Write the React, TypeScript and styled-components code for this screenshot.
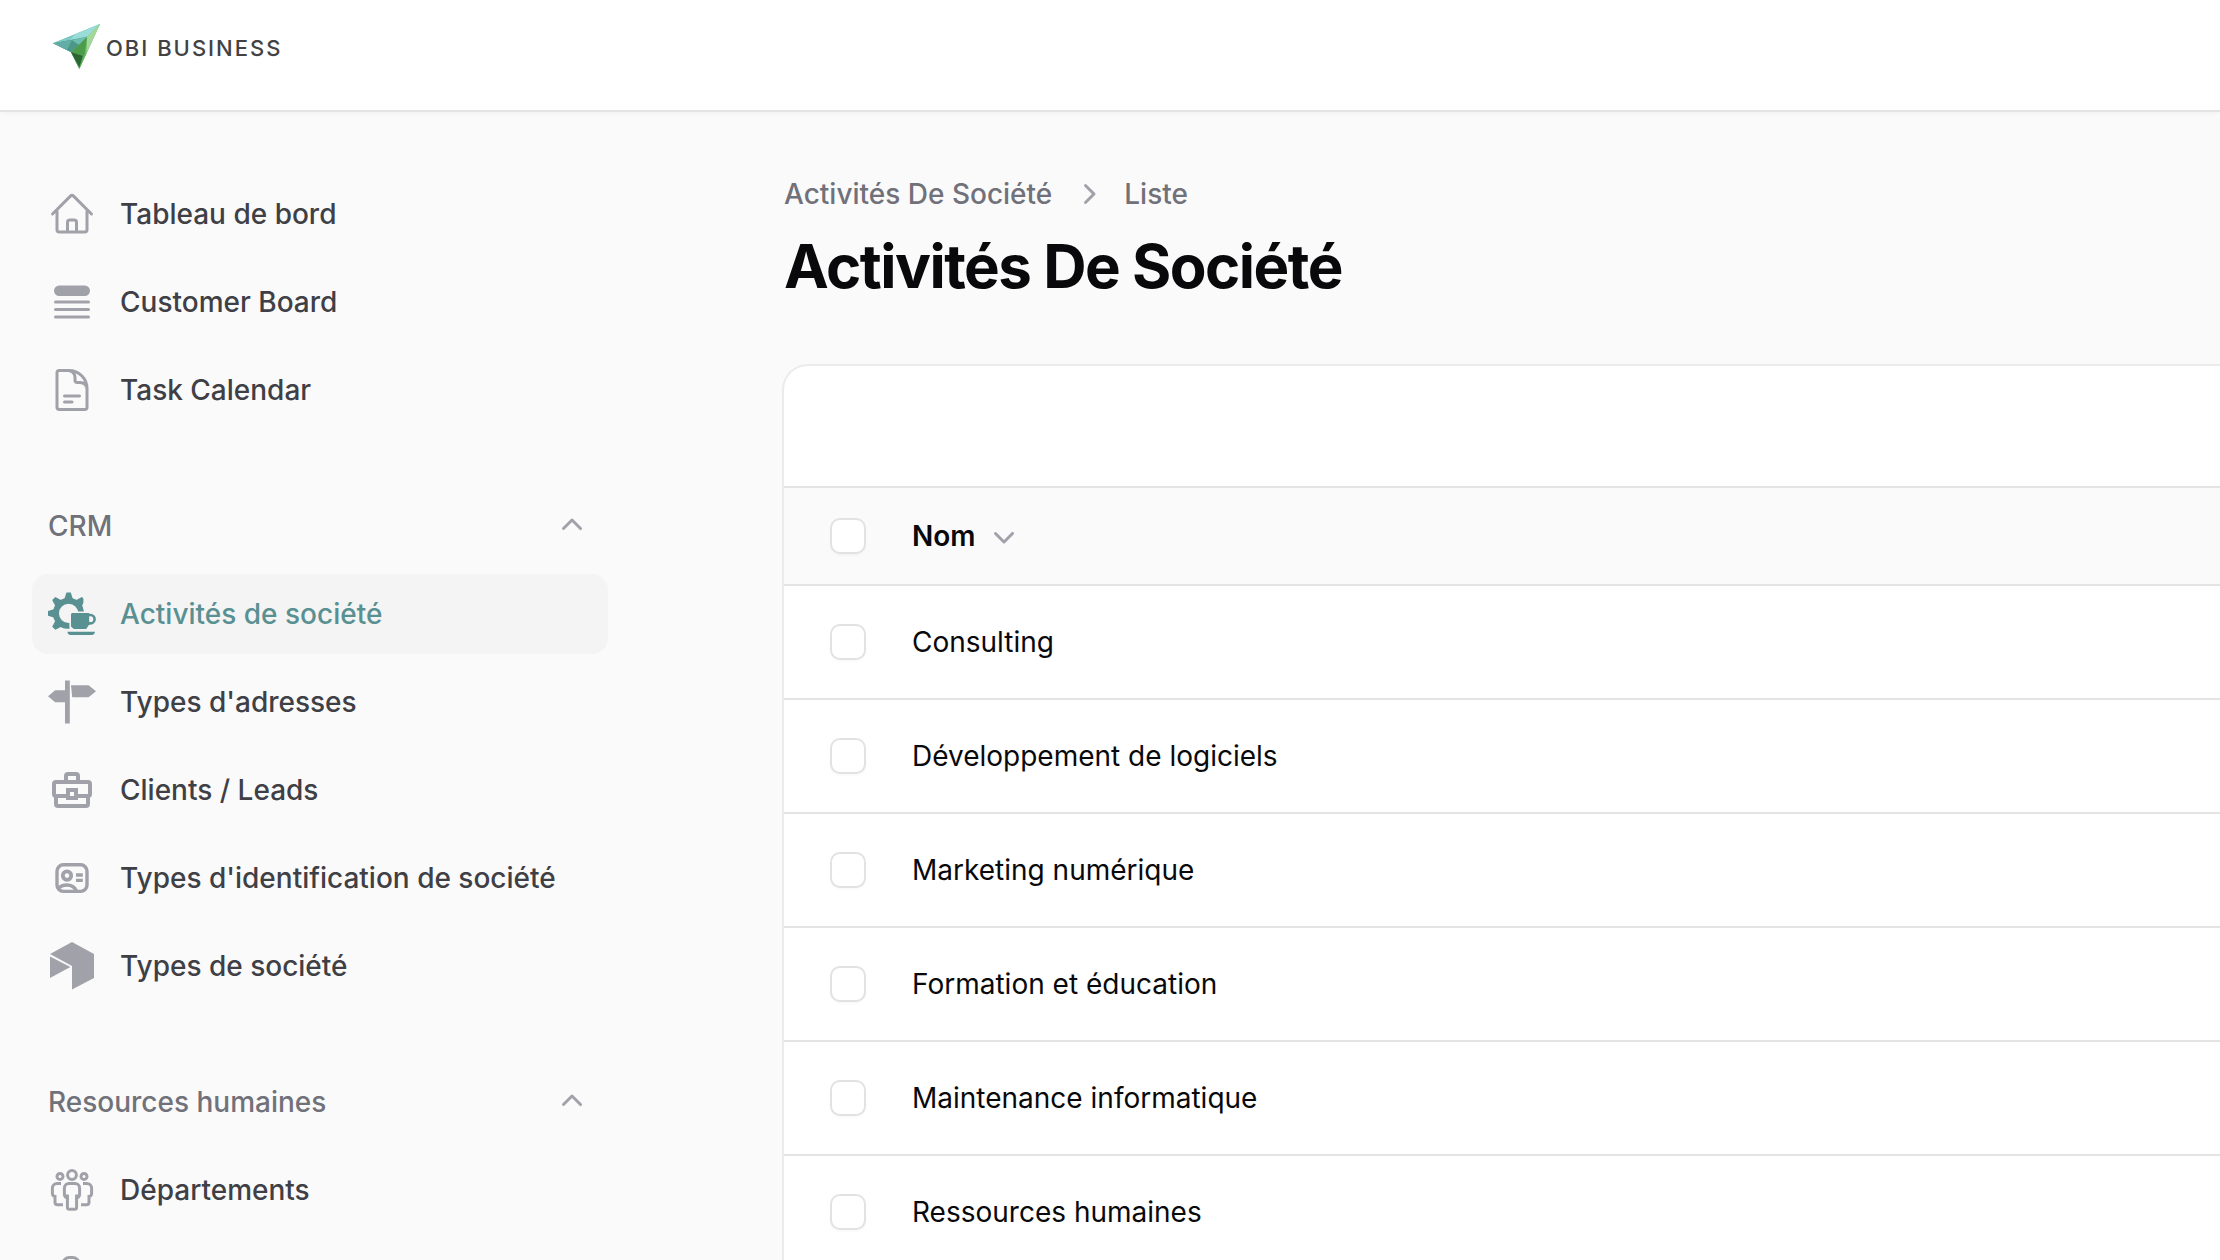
import React from "react";
import styled, { createGlobalStyle } from "styled-components";
import {
  HiOutlineHome,
  HiQueueList,
  HiOutlineDocumentText,
  HiMiniChevronUp,
  HiMiniChevronDown,
  HiMiniChevronRight,
} from "react-icons/hi2";

const color = {
  page: "#fafafa",
  line: "#e4e4e5",
  icon: "#a1a1aa",
  muted: "#71717a",
  label: "#3f3f46",
  ink: "#09090b",
  accent: "#599092",
  active: "#f4f4f4",
};

const GlobalStyle = createGlobalStyle`
  *, *::before, *::after { box-sizing: border-box; }
  body {
    margin: 0;
    background: ${color.page};
    color: ${color.ink};
    font-family: Inter, "Liberation Sans", sans-serif;
    font-size: 28px;
    line-height: 40px;
  }
`;

const Shell = styled.div`
  display: flex;
  flex-direction: column;
  height: 100vh;
  overflow: hidden;
`;

const Topbar = styled.header`
  display: flex;
  flex: none;
  padding: 20px 48px 34px;
  background: #fff;
  border-bottom: 2px solid ${color.line};
  box-shadow: 0 2px 4px rgba(0, 0, 0, 0.03);
`;

const Brand = styled.a`
  display: flex;
  align-items: center;
  gap: 4px;
  height: 56px;
  color: #424244;
  font-size: 22px;
  font-weight: 500;
  letter-spacing: 2px;
  text-decoration: none;
`;

const Body = styled.div`
  display: flex;
  flex: 1;
  min-height: 0;
`;

const Sidebar = styled.nav`
  display: flex;
  flex: none;
  flex-direction: column;
  gap: 56px;
  width: 640px;
  padding: 62px 32px 0;
`;

const Group = styled.section`
  display: flex;
  flex-direction: column;
  gap: 8px;
`;

const GroupToggle = styled.button`
  display: flex;
  align-items: center;
  justify-content: space-between;
  height: 80px;
  padding: 0 16px;
  border: 0;
  background: none;
  color: ${color.muted};
  font: inherit;
  font-weight: 500;
  text-align: left;
  cursor: pointer;

  svg {
    width: 40px;
    height: 40px;
    color: ${color.icon};
  }
`;

const ItemList = styled.ul`
  display: flex;
  flex-direction: column;
  gap: 8px;
  margin: 0;
  padding: 0;
  list-style: none;
`;

const ItemLink = styled.a<{ $active?: boolean }>`
  display: flex;
  align-items: center;
  gap: 24px;
  height: 80px;
  padding: 0 16px;
  border-radius: 16px;
  background: ${(p) => (p.$active ? color.active : "transparent")};
  color: ${(p) => (p.$active ? color.accent : color.label)};
  font-weight: 500;
  text-decoration: none;
  white-space: nowrap;

  svg {
    flex: none;
    width: 48px;
    height: 48px;
    color: ${(p) => (p.$active ? color.accent : color.icon)};
  }
`;

const Main = styled.main`
  flex: 1;
  min-width: 0;
  padding: 62px 0 0 142px;
`;

const PageHead = styled.div`
  padding-left: 2px;
`;

const Breadcrumbs = styled.ol`
  display: flex;
  align-items: center;
  gap: 16px;
  margin: 0 0 16px;
  padding: 0;
  color: ${color.muted};
  font-weight: 500;
  list-style: none;

  li {
    display: flex;
    align-items: center;
    gap: 16px;
  }

  a {
    color: inherit;
    text-decoration: none;
  }

  svg {
    width: 40px;
    height: 40px;
    color: ${color.icon};
  }
`;

const Title = styled.h1`
  margin: 0;
  font-size: 60px;
  font-weight: 700;
  letter-spacing: -0.025em;
  line-height: 72px;
`;

const Card = styled.div`
  margin-top: 62px;
  overflow: hidden;
  border: 2px solid #ebebec;
  border-right: 0;
  border-radius: 26px 0 0 0;
  background: #fff;
`;

const Toolbar = styled.div`
  height: 120px;
`;

const Table = styled.table`
  width: 100%;
  border-spacing: 0;
  border-collapse: separate;
  text-align: left;
`;

const CheckCell = styled.td`
  width: 128px;
  padding: 0 48px;
  border-top: 2px solid ${color.line};
`;

const HeadRow = styled.tr`
  height: 98px;
  background: ${color.page};
`;

const Row = styled.tr`
  height: 114px;
`;

const HeadCell = styled.th`
  padding: 0;
  border-top: 2px solid ${color.line};
  font-weight: 600;
`;

const Cell = styled.td`
  padding: 0;
  border-top: 2px solid ${color.line};
`;

const SortButton = styled.button`
  display: flex;
  align-items: center;
  gap: 8px;
  padding: 0;
  border: 0;
  background: none;
  color: inherit;
  font: inherit;
  cursor: pointer;

  svg {
    width: 40px;
    height: 40px;
    color: ${color.icon};
  }
`;

const Checkbox = styled.input`
  display: block;
  width: 32px;
  height: 32px;
  margin: 0;
  border-radius: 8px;
  background: #fff;
  box-shadow: 0 0 0 2px #e2e2e3, 0 2px 4px rgba(0, 0, 0, 0.06);
  appearance: none;

  &:checked {
    background: ${color.accent};
  }
`;

const PlaneLogo = () => (
  <svg width="54" height="50" viewBox="0 0 54 50" aria-hidden="true">
    <path d="M5 20.300 52 1 31.300 46 23 29.300Z" fill="#74bfa6" />
    <path d="M5 20.300 52 1 39 15Z" fill="#7cc9c4" />
    <path d="M27 11.300 52 1 41 13 22 17Z" fill="#9adcd8" />
    <path d="M5 20.300 39 14 23 29.300Z" fill="#4c9788" />
    <path d="M5 20.300 24 17 19 27Z" fill="#63ada6" />
    <path d="M24 17 39 14 31 22Z" fill="#6fbfb0" />
    <path d="M39 14 52 1 31.300 46Z" fill="#7cc576" />
    <path d="M39 14 52 1 39 29Z" fill="#a4d89b" />
    <path d="M39 14 23 29.300 31.300 46 37 30Z" fill="#4c9c4c" />
    <path d="M23 29.300 35 33 31.300 44Z" fill="#2b6534" />
    <path d="M35 33 39 29 31.300 46Z" fill="#5fb356" />
  </svg>
);

const toothAngles = [0, 45, 90, 135, 180, 225, 270, 315];

const GearCupIcon = () => (
  <svg viewBox="0 0 24 24" fill="currentColor" aria-hidden="true">
    <clipPath id="gear-clip">
      <path d="M0 0H17.700V10.700H10.700V19.300H8V24H0Z" />
    </clipPath>
    <g clipPath="url(#gear-clip)">
      <circle cx="10.300" cy="11.700" r="6.300" fill="none" stroke="currentColor" strokeWidth="3" />
      {toothAngles.map((a) => (
        <path key={a} d="M8.100 4.700 9.200 1.200h2.200l1.100 3.500z" transform={`rotate(${a} 10.300 11.700)`} />
      ))}
    </g>
    <path d="M12 11.500h8.600v5.700l-1.500 2.300h-6.200l-1.400-1.200V12z" />
    <path d="M20 12.500h1.200a2.100 2.100 0 0 1 0 4.200H20" fill="none" stroke="currentColor" strokeWidth="1.300" />
    <path d="M9.700 20.900h13.800a1.800 1.800 0 0 1-1.600 1.600H11.300a1.800 1.800 0 0 1-1.600-1.600z" />
  </svg>
);

const SignpostIcon = () => (
  <svg viewBox="0 0 24 24" fill="currentColor" aria-hidden="true">
    <path d="M8.500 1.200h2.400v21.600H8.500zM3.600 6.100h4.900v6H3.600L0 9.100zM11.500 3.600h8.800L24 6.600l-3.700 3h-8.200z" />
  </svg>
);

const BriefcaseIcon = () => (
  <svg viewBox="0 0 24 24" fill="none" stroke="currentColor" strokeWidth="2" aria-hidden="true">
    <path d="M9 8V5a1 1 0 0 1 1-1h4a1 1 0 0 1 1 1v3" />
    <path d="M10 15H4a1 1 0 0 1-1-1V9a1 1 0 0 1 1-1h16a1 1 0 0 1 1 1v5a1 1 0 0 1-1 1h-6" />
    <path d="M4 15v4a1 1 0 0 0 1 1h14a1 1 0 0 0 1-1v-4" />
    <rect x="10" y="12" width="4" height="4" />
  </svg>
);

const BadgeIcon = () => (
  <svg viewBox="0 0 24 24" fill="none" stroke="currentColor" strokeWidth="1.700" aria-hidden="true">
    <rect x="4.500" y="5.400" width="15" height="13.300" rx="3.200" />
    <circle cx="9.500" cy="10.800" r="2.100" strokeWidth="1.900" />
    <path d="M5 17.400c1.200-1.400 2.800-1.900 4.500-1.900s3.600.6 4.700 2.900M14 10.500h3.400M14 13.200h3.400" />
  </svg>
);

const CubeIcon = () => (
  <svg viewBox="0 0 24 24" fill="currentColor" aria-hidden="true">
    <path d="M12 0 23 6v12l-11 5.800V12L1 6zM1 7.200l10.200 5.300L1 18z" />
  </svg>
);

const TeamIcon = () => (
  <svg viewBox="0 0 24 24" fill="none" stroke="currentColor" strokeWidth="1.500" aria-hidden="true">
    <circle cx="12" cy="4.500" r="2.200" />
    <circle cx="6" cy="5.200" r="1.500" />
    <circle cx="18" cy="5.200" r="1.500" />
    <path d="M10.500 8.700h3a2.300 2.300 0 0 1 2.300 2.300v3.200a1.800 1.800 0 0 1-1.500 1.700v4.700a1 1 0 0 1-1 1h-2.600a1 1 0 0 1-1-1v-4.700a1.800 1.800 0 0 1-1.500-1.700V11a2.300 2.300 0 0 1 2.300-2.300z" />
    <path d="M9.700 16.500v-2.300M14.300 16.500v-2.300" />
    <path d="M6.500 8.700H4.600a2.400 2.400 0 0 0-2.400 2.400v2.700a1.400 1.400 0 0 0 1.300 1.400v2.900a1.300 1.300 0 0 0 1.300 1.300h2.700" />
    <path d="M17.500 8.700h1.900a2.400 2.400 0 0 1 2.400 2.400v2.700a1.400 1.400 0 0 1-1.300 1.400v2.900a1.300 1.300 0 0 1-1.300 1.300h-2.700" />
  </svg>
);

const PersonIcon = () => (
  <svg viewBox="0 0 24 24" fill="none" stroke="currentColor" strokeWidth="1.500" aria-hidden="true">
    <rect x="7.600" y="1.750" width="7.800" height="9" rx="3" />
    <path d="M3 22v-4a4 4 0 0 1 4-4h10a4 4 0 0 1 4 4v4" />
  </svg>
);

type Item = { label: string; Icon: React.ComponentType; active?: boolean; iconOnly?: boolean };

const groups: { title?: string; items: Item[] }[] = [
  {
    items: [
      { label: "Tableau de bord", Icon: HiOutlineHome },
      { label: "Customer Board", Icon: HiQueueList },
      { label: "Task Calendar", Icon: HiOutlineDocumentText },
    ],
  },
  {
    title: "CRM",
    items: [
      { label: "Activités de société", Icon: GearCupIcon, active: true },
      { label: "Types d'adresses", Icon: SignpostIcon },
      { label: "Clients / Leads", Icon: BriefcaseIcon },
      { label: "Types d'identification de société", Icon: BadgeIcon },
      { label: "Types de société", Icon: CubeIcon },
    ],
  },
  {
    title: "Resources humaines",
    items: [
      { label: "Départements", Icon: TeamIcon },
      { label: "Employés", Icon: PersonIcon, iconOnly: true },
    ],
  },
];

const activities = [
  "Consulting",
  "Développement de logiciels",
  "Marketing numérique",
  "Formation et éducation",
  "Maintenance informatique",
  "Ressources humaines",
];

export default function App() {
  return (
    <Shell>
      <GlobalStyle />
      <Topbar>
        <Brand href="#">
          <PlaneLogo />
          OBI BUSINESS
        </Brand>
      </Topbar>
      <Body>
        <Sidebar>
          {groups.map((group, i) => (
            <Group key={i}>
              {group.title && (
                <GroupToggle type="button" aria-expanded="true">
                  {group.title}
                  <HiMiniChevronUp />
                </GroupToggle>
              )}
              <ItemList>
                {group.items.map(({ label, Icon, active, iconOnly }) => (
                  <li key={label}>
                    <ItemLink
                      href="#"
                      $active={active}
                      aria-label={iconOnly ? label : undefined}
                      aria-current={active ? "page" : undefined}
                    >
                      <Icon />
                      {!iconOnly && label}
                    </ItemLink>
                  </li>
                ))}
              </ItemList>
            </Group>
          ))}
        </Sidebar>
        <Main>
          <PageHead>
            <Breadcrumbs>
              <li>
                <a href="#">Activités De Société</a>
              </li>
              <li>
                <HiMiniChevronRight />
                <a href="#">Liste</a>
              </li>
            </Breadcrumbs>
            <Title>Activités De Société</Title>
          </PageHead>
          <Card>
            <Toolbar />
            <Table>
              <thead>
                <HeadRow>
                  <CheckCell>
                    <Checkbox type="checkbox" aria-label="Tout sélectionner" />
                  </CheckCell>
                  <HeadCell scope="col">
                    <SortButton type="button">
                      Nom
                      <HiMiniChevronDown />
                    </SortButton>
                  </HeadCell>
                </HeadRow>
              </thead>
              <tbody>
                {activities.map((name) => (
                  <Row key={name}>
                    <CheckCell>
                      <Checkbox type="checkbox" aria-label={name} />
                    </CheckCell>
                    <Cell>{name}</Cell>
                  </Row>
                ))}
              </tbody>
            </Table>
          </Card>
        </Main>
      </Body>
    </Shell>
  );
}
